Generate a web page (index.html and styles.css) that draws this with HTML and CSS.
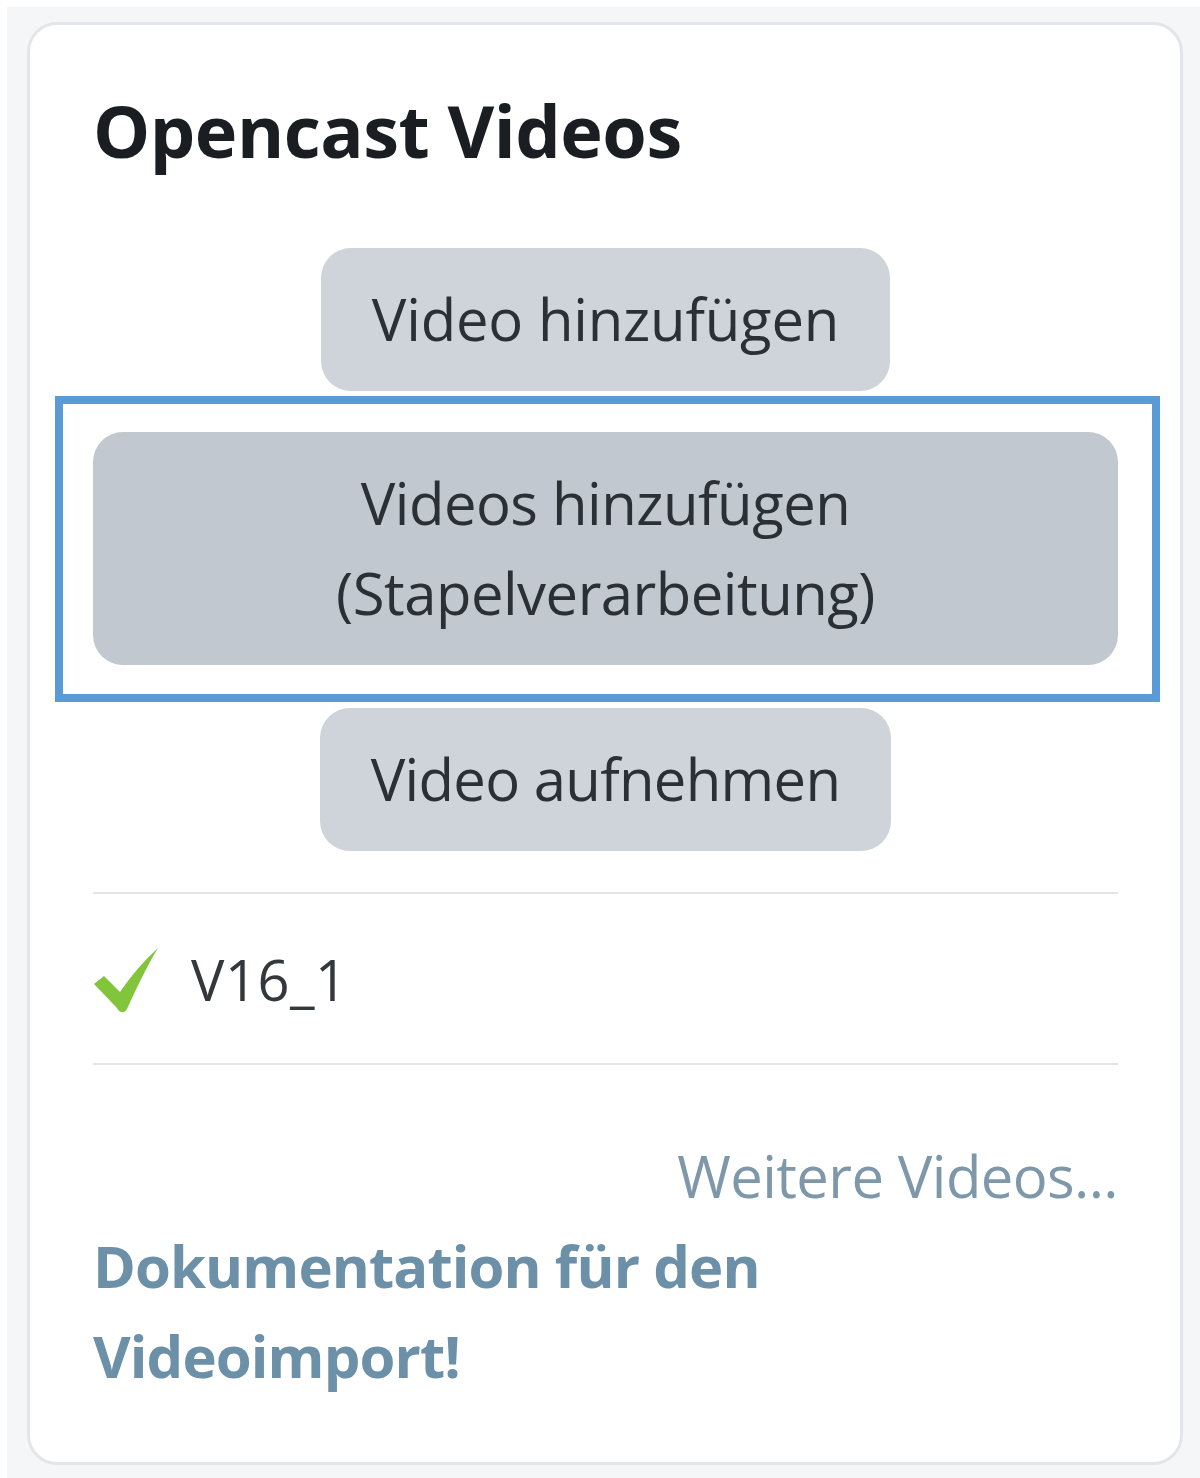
FILE: index.html
```html
<!DOCTYPE html>
<html lang="de">
<head>
<meta charset="utf-8">
<title>Opencast Videos</title>
<link rel="stylesheet" href="styles.css">
</head>
<body>
<div class="frame">
  <section class="card">
    <h5 class="card-title">Opencast Videos</h5>
    <div class="actions">
      <button class="btn btn-small" type="button">Video hinzufügen</button>
      <div class="focus-ring">
        <button class="btn btn-wide" type="button">Videos hinzufügen<br>(Stapelverarbeitung)</button>
      </div>
      <button class="btn btn-small btn-last" type="button">Video aufnehmen</button>
    </div>
    <ul class="video-list">
      <li class="video-item">
        <svg class="check" viewBox="0 0 66 66" aria-hidden="true">
          <path d="M1 36 L11 28 L27 44 Q44 19 65 0 Q51 23 34 61 Q32 65 29 64 Q26 64 24 60 Z" fill="#82c43a"/>
        </svg>
        <span class="video-name">V16_1</span>
      </li>
    </ul>
    <div class="more"><a href="#" class="more-link">Weitere Videos...</a></div>
    <a href="#" class="doc-link">Dokumentation für den Videoimport!</a>
  </section>
</div>
</body>
</html>
```
FILE: styles.css
```css
html, body {
  margin: 0;
  padding: 0;
  background: #ffffff;
}
body {
  font-family: "Open Sans", "Noto Sans", sans-serif;
  color: #1d2125;
}
.frame {
  margin: 7px 0 0 7px;
  background: #f5f6f8;
  padding: 15px 17px 13px 20px;
  min-height: 1443px;
}
.card {
  background: #fff;
  border: 3px solid #e3e6e9;
  border-radius: 30px;
  padding: 60px 62px 70px 63px;
  height: 1307px;
}
.card-title {
  margin: 0;
  font-size: 72px;
  font-weight: 700;
  line-height: 90px;
  letter-spacing: -0.5px;
  color: #1a1d21;
}
.actions {
  margin-top: 73px;
  display: flex;
  flex-direction: column;
  align-items: center;
}
.btn {
  font-family: "Open Sans", "Noto Sans", sans-serif;
  font-size: 58px;
  line-height: 90px;
  color: #2b3036;
  border: 0;
  border-radius: 30px;
  padding: 26px 51px 27px;
  background: #ced4da;
  letter-spacing: -0.2px;
}
.focus-ring {
  align-self: stretch;
  display: flex;
  margin: 5px -42px 0 -38px;
  padding: 28px 34px 29px 30px;
  border: 8px solid #5b9bd5;
}
.btn-wide {
  flex: 1;
  background: #c2c8cf;
  letter-spacing: -0.5px;
}
.btn-last {
  margin-top: 6px;
  letter-spacing: -0.7px;
}
.video-list {
  list-style: none;
  margin: 41px 0 0;
  padding: 0;
  border-top: 2px solid #e4e4e4;
  border-bottom: 2px solid #e4e4e4;
}
.video-item {
  display: flex;
  align-items: center;
  gap: 32px;
  height: 169px;
}
.check {
  width: 66px;
  height: 66px;
  margin-top: 4px;
}
.video-name {
  font-size: 56px;
  color: #33383d;
  letter-spacing: 0.5px;
}
.more {
  text-align: right;
  margin-top: 66px;
  font-size: 58px;
  line-height: 90px;
}
.more-link {
  color: #7f98a9;
  text-decoration: none;
  letter-spacing: -0.6px;
}
.doc-link {
  display: block;
  width: 700px;
  font-size: 58px;
  font-weight: 700;
  line-height: 90px;
  color: #6c90a8;
  text-decoration: none;
  letter-spacing: -0.9px;
}
```
